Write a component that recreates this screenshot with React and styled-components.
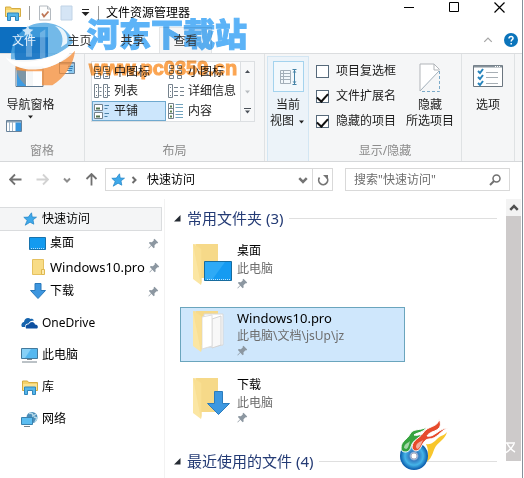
import React from "react";
import styled, { createGlobalStyle } from "styled-components";

const GlobalStyle = createGlobalStyle`
  * { box-sizing: border-box; }
  body {
    margin: 0;
    background: #fff;
    font-family: "Noto Sans", "Noto Sans CJK SC", sans-serif;
    font-size: 12px;
    line-height: 16px;
    color: #1c1c1c;
  }
  button, input { font: inherit; color: inherit; }
  svg { display: block; flex: none; }
`;

const Window = styled.div`
  position: relative;
  display: flex;
  flex-direction: column;
  height: 100vh;
  overflow: hidden;
  margin-right: 1px;
  border-right: 1px solid #84919a;
`;

const PlainButton = styled.button`
  display: flex;
  align-items: center;
  justify-content: center;
  padding: 0;
  border: 0;
  background: none;
`;

const TitleBar = styled.header`
  display: flex;
  align-items: center;
  height: 27px;
  padding: 0 0 2px 5px;
`;

const QuickTools = styled.div`
  display: flex;
  align-items: center;
  gap: 8px;
  padding-right: 7px;
`;

const Rule = styled.span`
  width: 1px;
  height: 14px;
  background: #9a9a9a;
`;

const Title = styled.h1`
  margin: 0;
  flex: 1;
  font-size: 12px;
  font-weight: 400;
  color: #000;
  white-space: nowrap;
`;

const WindowButtons = styled.div`
  display: flex;
  align-self: flex-start;
`;

const WindowButton = styled(PlainButton)`
  width: 45px;
  height: 15px;
`;

const TabBar = styled.nav`
  display: flex;
  height: 26px;
`;

const Tab = styled.button`
  width: ${(p) => (p.$file ? 48 : 53)}px;
  margin-right: ${(p) => (p.$file ? 5 : 0)}px;
  padding: 0;
  border: 1px solid ${(p) => (p.$active ? "#e3e5e7" : "transparent")};
  border-bottom: 0;
  background: ${(p) => (p.$file ? "#0d6fc0" : p.$active ? "#f5f6f7" : "none")};
  color: ${(p) => (p.$file ? "#e6f2fc" : "#333")};
`;

const TabLabel = styled.span`
  position: relative;
  z-index: 1;
`;

const TabTools = styled.div`
  display: flex;
  align-items: center;
  gap: 11px;
  margin-left: auto;
  padding-right: 4px;
`;

const Ribbon = styled.section`
  display: flex;
  height: 109px;
  border-top: 1px solid #dbdddf;
  border-bottom: 1px solid #d6d8da;
  background: #f5f6f7;
`;

const Group = styled.div`
  display: flex;
  flex-direction: column;
  width: ${(p) => p.$width}px;
  flex: none;
  padding: 7px ${(p) => p.$pad}px 2px;
  border-right: 1px solid #dfe2e4;
`;

const GroupLabel = styled.div`
  margin-top: auto;
  text-align: center;
  color: #8c8c8c;
`;

const PaneTools = styled.div`
  display: flex;
  justify-content: space-between;
  align-items: flex-start;
  width: 60px;
  height: 36px;
  padding-top: 1px;
  margin-left: 9px;
`;

const PaneButton = styled(PlainButton)`
  flex-direction: column;
  width: 49px;
  height: 22px;
  margin-bottom: 1px;
  white-space: nowrap;
`;

const Gallery = styled.div`
  display: grid;
  grid-template-columns: 1fr 14px;
  height: 61px;
  margin-right: 3px;
  border: 1px solid #dcdfe2;
  background: #fff;
`;

const GalleryItems = styled.div`
  display: grid;
  grid-template-columns: 1fr 1fr;
  grid-template-rows: 19px 20px 20px;
`;

const GalleryItem = styled(PlainButton)`
  justify-content: flex-start;
  min-width: 0;
  gap: 4px;
  padding-left: 1px;
  white-space: nowrap;
  border: 1px solid ${(p) => (p.$active ? "#6fa9cf" : "transparent")};
  background: ${(p) => (p.$active ? "#cce6fc" : "none")};
`;

const GallerySteps = styled.div`
  display: grid;
  grid-template-rows: repeat(3, 1fr);
  border-left: 1px solid #dcdfe2;
  background: #f7f8f9;
`;

const ViewButton = styled(PlainButton)`
  flex-direction: column;
  justify-content: flex-start;
  width: 42px;
  flex: none;
  margin: 2px 0 0 2px;
  padding-top: 4px;
  border: 1px solid #d3e6f3;
  border-bottom: 0;
  background: #ecf3f9;
`;

const ViewIconFrame = styled.span`
  display: flex;
  align-items: center;
  justify-content: center;
  width: 31px;
  height: 31px;
  margin-bottom: 5px;
  border: 1px solid #a4d3ee;
  background: #f2f8fc;
`;

const WithArrow = styled.span`
  display: flex;
  align-items: center;
  gap: 3px;
`;

const ShowTools = styled.div`
  display: flex;
  justify-content: space-between;
`;

const CheckList = styled.div`
  display: flex;
  flex-direction: column;
  gap: 9px;
  padding-top: 2px;
`;

const CheckLabel = styled.label`
  display: flex;
  align-items: center;
  gap: 7px;
  white-space: nowrap;
`;

const CheckBox = styled.input`
  appearance: none;
  display: flex;
  justify-content: center;
  width: 13px;
  height: 13px;
  margin: 0;
  border: 1px solid #56697a;
  background: #fff;
  &:checked::after {
    content: "";
    width: 5px;
    height: 9px;
    border: solid #111;
    border-width: 0 2px 2px 0;
    transform: rotate(42deg);
  }
`;

const BigButton = styled(PlainButton)`
  flex-direction: column;
  justify-content: flex-start;
  padding-top: 2px;
  white-space: nowrap;
`;

const BigIcon = styled.span`
  display: flex;
  align-items: flex-start;
  height: 34px;
`;

const AddressRow = styled.div`
  display: flex;
  align-items: center;
  height: 37px;
  padding: 0 12px 2px 9px;
`;

const NavButtons = styled.div`
  display: flex;
  align-items: center;
  gap: 14px;
  width: 96px;
`;

const AddressBox = styled.div`
  display: flex;
  align-items: center;
  flex: 1;
  height: 23px;
  border: 1px solid #d9d9d9;
  padding-left: 5px;
`;

const CrumbArrow = styled(PlainButton)`
  width: 18px;
`;

const Crumb = styled.span`
  flex: 1;
  padding-left: 4px;
  color: #000;
`;

const RefreshButton = styled(PlainButton)`
  width: 20px;
  height: 21px;
  margin-left: 4px;
  border-left: 1px solid #d9d9d9;
`;

const SearchBox = styled.label`
  display: flex;
  align-items: center;
  width: 165px;
  height: 23px;
  margin-left: 12px;
  padding: 0 8px;
  border: 1px solid #d9d9d9;
`;

const SearchInput = styled.input`
  flex: 1;
  min-width: 0;
  padding: 0;
  border: 0;
  outline: 0;
  background: none;
  &::placeholder { color: #6d6d6d; opacity: 1; }
`;

const Body = styled.main`
  display: flex;
  flex: 1;
  min-height: 0;
`;

const Sidebar = styled.aside`
  display: flex;
  flex-direction: column;
  width: 165px;
  flex: none;
  padding-top: 8px;
  border-right: 1px solid #f2f2f2;
`;

const SideLink = styled.a`
  display: flex;
  align-items: center;
  flex: none;
  gap: 4px;
  height: 24px;
  margin: ${(p) => (p.$gap ? 8 : 0)}px 2px 0 0;
  padding: 0 2px 0 ${(p) => (p.$nested ? 29 : 21)}px;
  border: 1px solid ${(p) => (p.$active ? "#dadcde" : "transparent")};
  border-left: 0;
  background: ${(p) => (p.$active ? "#f4f5f6" : "none")};
  color: #000;
  text-decoration: none;
`;

const SideText = styled.span`
  flex: 1;
  font-size: ${(p) => (p.$latin ? 13 : 12)}px;
`;

const SideIcon = styled.span`
  display: flex;
  justify-content: center;
  width: 17px;
  flex: none;
`;

const Content = styled.section`
  flex: 1;
  min-width: 0;
  padding: 9px 9px 0;
`;

const SectionTitle = styled.h2`
  display: flex;
  align-items: center;
  gap: 6px;
  height: 20px;
  margin: 0;
  font-size: 15px;
  font-weight: 400;
  line-height: 20px;
  color: #243b75;
  white-space: nowrap;
  &::after {
    content: "";
    flex: 1;
    height: 1px;
    background: #dfdfdf;
  }
`;

const Tiles = styled.div`
  display: flex;
  flex-direction: column;
  gap: 12px;
  padding: 12px 0 22px 6px;
`;

const Tile = styled.a`
  display: flex;
  gap: 4px;
  width: 225px;
  max-width: 100%;
  height: 55px;
  padding: 1px 0 0 11px;
  border: 1px solid ${(p) => (p.$active ? "#6aa5bd" : "transparent")};
  background: ${(p) => (p.$active ? "#cfe7fc" : "none")};
  color: #000;
  text-decoration: none;
`;

const TileText = styled.div`
  display: flex;
  flex-direction: column;
  line-height: 18px;
`;

const TileName = styled.span`
  font-size: ${(p) => (p.$latin ? 13 : 12)}px;
`;

const TilePath = styled.span`
  color: #6d6d6d;
`;

const ScrollTrack = styled.div`
  display: flex;
  flex-direction: column;
  width: 16px;
  flex: none;
  padding: 0 1px 17px 0;
`;

const ScrollUp = styled(PlainButton)`
  height: 17px;
  background: #f3f3f3;
`;

const ScrollThumb = styled.div`
  flex: 1;
  background: #cdcaca;
`;

const SiteLogoMark = styled.div`
  position: absolute;
  top: 20px;
  left: 5px;
  pointer-events: none;
`;

const SiteText = styled.div`
  position: absolute;
  top: 13px;
  left: 87px;
  display: flex;
  flex-direction: column;
  white-space: nowrap;
  mix-blend-mode: multiply;
  pointer-events: none;
`;

const SiteName = styled.span`
  font-size: 32px;
  font-weight: 900;
  line-height: 42px;
  color: #5cb3f7;
  -webkit-text-stroke: 1px #5cb3f7;
`;

const SiteUrl = styled.span`
  font-family: "Liberation Sans", sans-serif;
  font-weight: 700;
  font-size: 20px;
  line-height: 27px;
  padding-left: 2px;
  color: #fba552;
  -webkit-text-stroke: 1px #fba552;
`;

const DiscMark = styled.div`
  position: absolute;
  right: 73px;
  bottom: 7px;
  pointer-events: none;
`;

const CornerMark = styled.div`
  position: absolute;
  right: 6px;
  bottom: 22px;
  pointer-events: none;
`;

const Library = ({ size = 16 }) => (
  <svg width={size} height={size} viewBox="0 0 16 16">
    <path d="M.5 2h5l1 1.500h9v8H.5z" fill="#f5d36b" stroke="#d5ac42" />
    <path d="M1 5h14v6H1z" fill="#fbe391" />
    <path d="M2.500 8h11v7.500h-3v-4h-5v4h-3z" fill="#55b5e9" stroke="#3087bd" />
  </svg>
);

const DocCheck = () => (
  <svg width="14" height="16" viewBox="0 0 14 16">
    <path d="M1.500 1h8l3 3v11h-11z" fill="#fdfdfd" stroke="#b4bac0" />
    <path d="M9.500 1v3h3" fill="none" stroke="#b4bac0" />
    <path d="m4 8.500 2 3 4.500-5" fill="none" stroke="#be7656" strokeWidth="1.800" />
  </svg>
);

const DocBlue = () => (
  <svg width="13" height="16" viewBox="0 0 13 16">
    <path d="M1 1h11v14H1z" fill="#d5e5f5" stroke="#c0d3e6" />
  </svg>
);

const ToolMenu = () => (
  <svg width="9" height="8" viewBox="0 0 9 8">
    <path d="M1 .5h7" stroke="#222" />
    <path d="M.5 3h8l-4 4z" fill="#222" />
  </svg>
);

const Triangle = ({ up, color = "#4a5058", bar }) => (
  <svg width="9" height="7" viewBox="0 0 9 7">
    {bar && <path d="M1 .5h7" stroke={color} />}
    <path d={up ? "M2 5h5L4.500 2z" : "M2 2.500h5L4.500 5.500z"} fill={color} />
  </svg>
);

const NavPaneIcon = () => (
  <svg width="29" height="26" viewBox="0 0 29 26">
    <path d="M1 5.500h27v19H1z" fill="#fff" stroke="#5d7890" />
    <path d="M1 4.500h27v3H1z" fill="#8ea5b8" />
    <path d="M2 8h9v16H2z" fill="#3e9be2" />
    <path d="M12 8h6v16h-6z" fill="#f4f6f7" />
  </svg>
);

const PreviewPane = ({ lines }) => (
  <svg width="16" height="12" viewBox="0 0 16 12">
    <path d="M.5.5h15v11H.5z" fill="#fff" stroke="#68829a" />
    <path d="M1 1h14v1.500H1z" fill="#8ba0b2" />
    <path d="M9.500 2.500H15V11H9.500z" fill={lines ? "#8cc9f0" : "#3594dd"} />
    {lines ? (
      <path d="M9 4.500h5M8.500 6.500h5M8 8.500h5" stroke="#347fb7" />
    ) : (
      <path d="M3.500 2v9M6.500 2v9" stroke="#9fb5c8" />
    )}
  </svg>
);

const LayoutIcon = ({ kind }) => (
  <svg width="16" height="16" viewBox="0 0 16 16" fill="none" stroke="#75828d">
    {kind === "medium" && (
      <>
        <path d="M.5 2.500h6v5h-6zM9.500 2.500h6v5h-6zM.5 9.500h6v5h-6zM9.500 9.500h6v5h-6z" />
        <path d="M2 5.500h3M11 5.500h3M2 12.500h3M11 12.500h3" stroke="#6a7f91" />
      </>
    )}
    {kind === "small" && (
      <path d="M1.500 1.500h4v3h-4zM1.500 6.500h4v3h-4zM1.500 11.500h4v3h-4zM9.500 1.500h4v3h-4zM9.500 6.500h4v3h-4zM9.500 11.500h4v3h-4z" />
    )}
    {kind === "list" && (
      <>
        <path d="M.5 1.500h4v13h-4zM9.500 1.500h4v13h-4z" />
        <path d="M2 4.500h1M2 8.500h1M2 12.500h1M11 4.500h1M11 8.500h1M11 12.500h1M5.500 4.500h2M5.500 8.500h2M5.500 12.500h2M14 4.500h2M14 8.500h2M14 12.500h2" />
      </>
    )}
    {kind === "details" && (
      <>
        <path d="M.5 1.500h4v13h-4z" />
        <path d="M2 4.500h1M2 8.500h1M2 12.500h1M6 4.500h4M6 8.500h4M6 12.500h4M12 4.500h4M12 8.500h4M12 12.500h4" />
      </>
    )}
    {kind === "tiles" && (
      <>
        <path d="M.5 1.500h8v6h-8zM.5 9.500h8v6h-8z" fill="#fff" />
        <path d="M2 5.500h4M2 13.500h4" stroke="#52734f" strokeWidth="2" />
        <path d="M10.500 2.500H15M10.500 5.500h3M10.500 10.500H15M10.500 13.500h3" stroke="#4d83a8" />
      </>
    )}
    {kind === "content" && (
      <>
        <path d="M.5.5h5v15h-5zM.5 5.500h5M.5 10.500h5" fill="#fff" />
        <path d="M2 3.500h2M2 8.500h2M2 13.500h2" stroke="#5f8450" strokeWidth="2" />
        <path d="M7.500 1.500H15M7.500 4.500H15M7.500 8.500H15M7.500 11.500H15M7.500 14.500H15" stroke="#71a3bd" />
      </>
    )}
  </svg>
);

const CurrentView = () => (
  <svg width="17" height="18" viewBox="0 0 17 18" fill="none">
    <path d="M.5 2.500h10v13H.5zM.5 5.500h10M.5 8.500h10M.5 11.500h10M3.500 2.500v13" stroke="#a3afb9" />
    <path d="M14.500 2v14M12.500 1.500h4M12.500 16.500h4" stroke="#4482a6" />
    <path d="m12.500 4.500 2-2 2 2zM12.500 13.500l2 2 2-2z" fill="#4482a6" />
  </svg>
);

const HideIcon = () => (
  <svg width="22" height="30" viewBox="0 0 22 30" fill="none">
    <path d="M1 1h14l6 6L1 27z" fill="#fff" />
    <path d="M1 28V1h14l5.500 5.500M15 1v6h5.500" stroke="#b1b5b9" />
    <path d="M20 8 1 28" stroke="#a4b1bb" />
    <path d="M20.500 8v20.500H1" stroke="#7baac8" strokeDasharray="3 2" />
  </svg>
);

const OptionsIcon = () => (
  <svg width="30" height="25" viewBox="0 0 30 25" fill="none">
    <path d="M.5 2.500h29v21H.5z" fill="#fff" stroke="#6b7680" />
    <path d="M1 3.500h28" stroke="#87929b" strokeWidth="2" />
    <path d="M22 3.500h6" stroke="#fff" strokeDasharray="1 1" />
    <path d="m5 8 2 2 3-4M5 14l2 2 3-4M5 20l2 2 3-4" stroke="#2784bc" strokeWidth="2" />
    <path d="M13 9.500h12M13 14.500h12M13 20.500h12" stroke="#a7afb5" />
  </svg>
);

const Arrow = ({ turn = 0, color = "#717171" }) => (
  <svg width="13" height="13" viewBox="0 0 13 13">
    <path d="M12.500 6.500H1.500M6 1.500l-5 5 5 5" transform={`rotate(${turn} 6.500 6.500)`} fill="none" stroke={color} strokeWidth="1.800" />
  </svg>
);

const Chevron = ({ turn = 0, size = 8, color = "#6c6c6c", weight = 2 }) => (
  <svg width={size} height={size} viewBox="0 0 8 8">
    <path d="m1 2.500 3 3 3-3" transform={`rotate(${turn} 4 4)`} fill="none" stroke={color} strokeWidth={weight} />
  </svg>
);

const Star = () => (
  <svg width="14" height="14" viewBox="0 0 14 14">
    <path d="m8.500.8.7 4.200 4.300.2-3.500 2.600.8 4.400-3.700-2-4.900 3 2-4.800L.8 5.300l4.500-.2z" fill="#3fa9ea" stroke="#1f82c4" strokeWidth=".7" />
  </svg>
);

const Pin = () => (
  <svg width="11" height="11" viewBox="0 0 11 11">
    <path d="m6.500.8 3.700 3.700-1 .9-.7-.2-2 2 .1 2.200-.9.8-2.400-2.400L.8 10.500l-.4-.4L3 7.300.9 5l.8-.9 2.200.1 2-2-.3-.6z" fill="#8c97a1" />
  </svg>
);

const Desktop = () => (
  <svg width="17" height="13" viewBox="0 0 17 13">
    <path d="M.5.5h16v12H.5z" fill="#139bf0" stroke="#1873ad" />
    <path d="M2 11.500h13" stroke="#b9e1fb" strokeDasharray="1 1" />
  </svg>
);

const SmallFolder = () => (
  <svg width="14" height="16" viewBox="0 0 14 16">
    <path d="M1.500.5h11v15h-11z" fill="#f8dc86" stroke="#e5c160" />
    <path d="M10.500 10.500h3v5h-3z" fill="#fbe9ae" stroke="#dfb84e" />
  </svg>
);

const DownArrow = () => (
  <svg width="16" height="16" viewBox="0 0 16 16">
    <path d="M5 .5h6v7h4.500L8 15.500.5 7.500H5z" fill="#3d96df" stroke="#2a79bb" />
  </svg>
);

const OneDrive = () => (
  <svg width="17" height="12" viewBox="0 0 17 12">
    <path d="M1 10C-.5 7.500 1 5.300 3 5c.4-3.500 4-5 6.500-3 1-.7 2.700-.2 3.500 1.500-3 0-4.800 1.300-5.500 3C5 6.500 4 8 4.200 10z" fill="#1664ad" />
    <path d="M5 11.500c-1-3 1-4.500 3-4.200.8-3.200 5.500-3.200 6 .2 3 0 3.500 3 2 4z" fill="#0e50a0" />
  </svg>
);

const Computer = () => (
  <svg width="17" height="16" viewBox="0 0 17 16">
    <path d="M.5 1.500h16v10H.5z" fill="#55b8f0" stroke="#437a9d" />
    <path d="M1 2h9L4 11H1z" fill="#87d1f7" />
    <path d="M6 12.500h5M1 15h15" stroke="#78858e" />
  </svg>
);

const Network = () => (
  <svg width="17" height="16" viewBox="0 0 17 16">
    <circle cx="11" cy="6.500" r="5.500" fill="#4a8db9" />
    <path d="M8 2.500c3-1 4 .5 4 2.500l3-2M13 6l3 1-2 4" fill="none" stroke="#b6d9e8" strokeWidth="1.500" />
    <path d="M.5 6.500h11v7H.5z" fill="#5bbdf1" stroke="#3a82ae" />
    <path d="M3 15.500h6" stroke="#73818b" />
  </svg>
);

const BigFolder = ({ kind }) => (
  <svg width="41" height="44" viewBox="0 0 41 44">
    <path d="M4 2h22v34H4z" fill="#f6d989" />
    {kind === "files" && (
      <>
        <path d="M12 5h19v31l-19 3z" fill="#fff" stroke="#d8d8d8" />
        <path d="m20 10 9-3v29l-9 3z" fill="#f8f8f8" stroke="#d4d4d4" />
        <path d="m10 8 10-2v31l-10 3z" fill="#fff" stroke="#dedede" />
      </>
    )}
    <path d="m1 2 8 5v36l-8-6z" fill="#fbe6a3" />
    <path d="M1 2h4l5 5v33l-1 3z" fill="#f8dc8b" opacity=".7" />
    {kind === "desktop" && (
      <>
        <path d="M12.500 19.500h27v19h-27z" fill="#159bf2" stroke="#176c9f" />
        <path d="M13 20h20L20 38h-7z" fill="#2eaaf6" />
        <path d="M15 37.500h23" stroke="#c4e6fb" strokeDasharray="1 1" />
      </>
    )}
    {kind === "download" && (
      <path d="M22.500 15.500h8v12h7L26.500 38.500 15.500 27.500h7z" fill="#3d98e1" stroke="#2b7cbd" />
    )}
  </svg>
);

const SiteLogo = () => (
  <svg width="75" height="70" viewBox="15 30 225 210">
    <path d="M33 148C30 85 75 38 130 38c40 0 82 22 90 62-30 30-75 45-120 48-25 2-48 1-67 0z" fill="#4ba5e2" opacity=".78" />
    <path d="M50 82h94v58c-24 8-56 10-98 10-4-20-2-48 4-68z" fill="#1673c2" opacity=".85" />
    <path d="M165 48c28 4 42 28 36 52l-18 12c10-24 4-48-18-64z" fill="#fff" opacity=".85" />
    <path d="M120 68l16-10v86h-16zM78 84l18-4v60H78z" fill="#b9d9f2" opacity=".4" />
    <path d="m83 46 5 11 12 2-9 8 2 11-10-6-10 6 2-11-9-8 12-2z" fill="#d0e7f8" />
    <path d="M46 168c24 8 38 9 54 8v8H76l-26-3zM100 176c46 0 90-16 125-54-3 40-32 82-68 104h-31v-42h-26z" fill="#f58c35" opacity=".75" />
    <path d="M46 168l32 8v50c-16-12-29-32-32-58z" fill="#f58c35" opacity=".35" />
    <path d="M16 140c20 16 58 18 92 12 46-8 88-28 122-66-14 54-62 86-116 92-44 4-82-10-98-38z" fill="#fff" opacity=".93" />
  </svg>
);

const DiscLogo = () => (
  <svg width="50" height="52" viewBox="0 0 50 52">
    <defs>
      <radialGradient id="disc">
        <stop offset="0" stopColor="#fff" />
        <stop offset=".18" stopColor="#e6e3ee" />
        <stop offset=".35" stopColor="#347ec3" />
        <stop offset=".65" stopColor="#45b4e8" />
        <stop offset="1" stopColor="#0757a8" />
      </radialGradient>
    </defs>
    <path d="M27 25c5 1 8-2 11-5 4-4 7-3 10-7-2 7-7 9-11 14-3 4-3 11-9 16 1-7 2-12-1-18z" fill="#f8c62c" />
    <circle cx="15" cy="37" r="14" fill="url(#disc)" />
    <circle cx="15" cy="37" r="3" fill="#fff" stroke="#a6abc2" />
    <path d="M2 29c0-7 6-8 9-14 3-6 10-3 17-7-4 6-9 5-13 8 4 1 8-1 12-3-4 8-11 6-14 12-2 5-2 8-7 8-3 0-4-2-4-4z" fill="#37a440" stroke="#fff" />
    <path d="M13 28c1-8 7-8 11-14 5-8 15-5 16-14 4 8-1 11-7 13-2 1-4 2-5 4 7 2 12-8 21-8-8 3-11 11-19 11-7 0-7 12-13 12-2 0-4-2-4-4z" fill="#e64b2c" stroke="#fff" />
    <path d="M5 29c0-4 4-5 6-7-1 4-2 8-4 8zM17 28c0-4 4-5 7-7-2 5-4 9-6 9z" fill="#fff" opacity=".55" />
  </svg>
);

const layouts = [
  ["medium", "中图标"],
  ["small", "小图标"],
  ["list", "列表"],
  ["details", "详细信息"],
  ["tiles", "平铺"],
  ["content", "内容"],
];

const places = [
  { text: "快速访问", icon: <Star />, active: true },
  { text: "桌面", icon: <Desktop />, nested: true },
  { text: "Windows10.pro", icon: <SmallFolder />, nested: true, latin: true },
  { text: "下载", icon: <DownArrow />, nested: true },
  { text: "OneDrive", icon: <OneDrive />, gap: true },
  { text: "此电脑", icon: <Computer />, gap: true },
  { text: "库", icon: <Library />, gap: true },
  { text: "网络", icon: <Network />, gap: true },
];

const folders = [
  { name: "桌面", path: "此电脑", kind: "desktop" },
  { name: "Windows10.pro", path: "此电脑\\文档\\jsUp\\jz", kind: "files", active: true, latin: true },
  { name: "下载", path: "此电脑", kind: "download" },
];

const SectionHeading = ({ children }) => (
  <SectionTitle>
    <svg width="7" height="7" viewBox="0 0 7 7">
      <path d="M6.500 0v6.500H0z" fill="#252b33" />
    </svg>
    {children}
  </SectionTitle>
);

const Check = ({ label, checked }) => (
  <CheckLabel>
    <CheckBox type="checkbox" defaultChecked={checked} />
    {label}
  </CheckLabel>
);

export default function App() {
  return (
    <>
      <GlobalStyle />
      <Window>
        <TitleBar>
          <QuickTools>
            <Library />
            <Rule />
            <DocCheck />
            <DocBlue />
            <PlainButton aria-label="自定义快速访问工具栏"><ToolMenu /></PlainButton>
            <Rule />
          </QuickTools>
          <Title>文件资源管理器</Title>
          <WindowButtons>
            <WindowButton aria-label="最小化">
              <svg width="11" height="11" viewBox="0 0 11 11"><path d="M0 5.500h10" stroke="#000" /></svg>
            </WindowButton>
            <WindowButton aria-label="最大化">
              <svg width="11" height="11" viewBox="0 0 11 11"><path d="M.5.5h9v9h-9z" fill="none" stroke="#000" /></svg>
            </WindowButton>
            <WindowButton aria-label="关闭">
              <svg width="11" height="11" viewBox="0 0 11 11"><path d="m.5.5 10 10M10.500.5l-10 10" stroke="#000" strokeWidth="1.200" /></svg>
            </WindowButton>
          </WindowButtons>
        </TitleBar>

        <TabBar>
          <Tab $file><TabLabel>文件</TabLabel></Tab>
          <Tab><TabLabel>主页</TabLabel></Tab>
          <Tab><TabLabel>共享</TabLabel></Tab>
          <Tab $active><TabLabel>查看</TabLabel></Tab>
          <TabTools>
            <PlainButton aria-label="折叠功能区"><Chevron turn={180} size={10} color="#a6a6a6" weight={1} /></PlainButton>
            <PlainButton aria-label="帮助">
              <svg width="14" height="14" viewBox="0 0 14 14">
                <circle cx="7" cy="7" r="7" fill="#0b74bb" />
                <path d="M5 5.500c0-3 4.500-2.500 4 0-.2 1-1.800 1.300-1.800 3M7.200 10v1.500" fill="none" stroke="#fff" strokeWidth="1.500" />
              </svg>
            </PlainButton>
          </TabTools>
        </TabBar>

        <Ribbon>
          <Group $width={85} $pad={6}>
            <PaneTools>
              <NavPaneIcon />
              <PreviewPane lines />
            </PaneTools>
            <PaneButton>
              导航窗格
              <Triangle color="#222" />
            </PaneButton>
            <PreviewPane />
            <GroupLabel>窗格</GroupLabel>
          </Group>

          <Group $width={180} $pad={6}>
            <Gallery>
              <GalleryItems>
                {layouts.map(([kind, text]) => (
                  <GalleryItem key={kind} $active={kind === "tiles"}>
                    <LayoutIcon kind={kind} />
                    {text}
                  </GalleryItem>
                ))}
              </GalleryItems>
              <GallerySteps>
                <PlainButton aria-label="向上"><Triangle up /></PlainButton>
                <PlainButton aria-label="向下"><Triangle color="#b8bcc0" /></PlainButton>
                <PlainButton aria-label="更多"><Triangle bar /></PlainButton>
              </GallerySteps>
            </Gallery>
            <GroupLabel>布局</GroupLabel>
          </Group>

          <ViewButton>
            <ViewIconFrame><CurrentView /></ViewIconFrame>
            <span>当前</span>
            <WithArrow>视图<Triangle color="#222" /></WithArrow>
          </ViewButton>

          <Group $width={153} $pad={7}>
            <ShowTools>
              <CheckList>
                <Check label="项目复选框" />
                <Check label="文件扩展名" checked />
                <Check label="隐藏的项目" checked />
              </CheckList>
              <BigButton>
                <BigIcon><HideIcon /></BigIcon>
                <span>隐藏</span>
                <span>所选项目</span>
              </BigButton>
            </ShowTools>
            <GroupLabel>显示/隐藏</GroupLabel>
          </Group>

          <Group $width={53} $pad={8}>
            <BigButton>
              <BigIcon><OptionsIcon /></BigIcon>
              <span>选项</span>
            </BigButton>
          </Group>
        </Ribbon>

        <AddressRow>
          <NavButtons>
            <PlainButton aria-label="后退"><Arrow /></PlainButton>
            <PlainButton aria-label="前进"><Arrow turn={180} color="#d2d2d2" /></PlainButton>
            <PlainButton aria-label="最近位置"><Chevron color="#8d8d8d" /></PlainButton>
            <PlainButton aria-label="向上"><Arrow turn={90} /></PlainButton>
          </NavButtons>
          <AddressBox>
            <Star />
            <CrumbArrow aria-label="展开"><Chevron turn={-90} /></CrumbArrow>
            <Crumb>快速访问</Crumb>
            <PlainButton aria-label="历史记录"><Chevron size={10} color="#747474" /></PlainButton>
            <RefreshButton aria-label="刷新">
              <svg width="12" height="12" viewBox="0 0 12 12">
                <path d="M2.500 3.500A4.500 4.500 0 1 0 9.500 3" fill="none" stroke="#757575" strokeWidth="1.700" />
                <path d="M6 1h5v5z" fill="#757575" />
              </svg>
            </RefreshButton>
          </AddressBox>
          <SearchBox>
            <SearchInput aria-label="搜索" placeholder={'搜索"快速访问"'} />
            <svg width="12" height="12" viewBox="0 0 12 12">
              <circle cx="7.500" cy="4.500" r="3.500" fill="none" stroke="#717171" strokeWidth="1.500" />
              <path d="M5 7 1 11" stroke="#717171" strokeWidth="2" />
            </svg>
          </SearchBox>
        </AddressRow>

        <Body>
          <Sidebar>
            {places.map((p) => (
              <SideLink key={p.text} href="#" $active={p.active} $nested={p.nested} $gap={p.gap}>
                <SideIcon>{p.icon}</SideIcon>
                <SideText $latin={p.latin}>{p.text}</SideText>
                {p.nested && <Pin />}
              </SideLink>
            ))}
          </Sidebar>
          <Content>
            <SectionHeading>常用文件夹 (3)</SectionHeading>
            <Tiles>
              {folders.map((f) => (
                <Tile key={f.name} href="#" $active={f.active}>
                  <BigFolder kind={f.kind} />
                  <TileText>
                    <TileName $latin={f.latin}>{f.name}</TileName>
                    <TilePath>{f.path}</TilePath>
                    <Pin />
                  </TileText>
                </Tile>
              ))}
            </Tiles>
            <SectionHeading>最近使用的文件 (4)</SectionHeading>
          </Content>
          <ScrollTrack>
            <ScrollUp aria-label="向上滚动"><Chevron turn={180} size={10} color="#505050" /></ScrollUp>
            <ScrollThumb />
          </ScrollTrack>
        </Body>

        <SiteLogoMark><SiteLogo /></SiteLogoMark>
        <SiteText>
          <SiteName>河东下载站</SiteName>
          <SiteUrl>www.pc0359.cn</SiteUrl>
        </SiteText>
        <DiscMark><DiscLogo /></DiscMark>
        <CornerMark>
          <svg width="12" height="16" viewBox="0 0 12 16">
            <path d="M1 3h10M3 3c2 4 4 7 8 9M10 4C8 8 5 11 1 13" fill="none" stroke="#fff" strokeWidth="1.500" />
          </svg>
        </CornerMark>
      </Window>
    </>
  );
}
